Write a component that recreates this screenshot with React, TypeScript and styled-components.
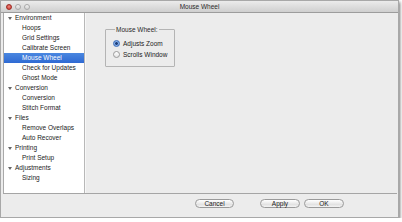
import styled, { createGlobalStyle } from 'styled-components'

const Global = createGlobalStyle`
  html, body { margin: 0; padding: 0; background: #fff; }
  body { font-family: "Liberation Sans", Arial, sans-serif; }
`

const Window = styled.div`
  width: 399px;
  height: 218px;
  display: flex;
  flex-direction: column;
  background: #ececec;
  border: 1px solid #a8a8a8;
  box-sizing: border-box;
  box-shadow: 1px 2px 3px rgba(0, 0, 0, 0.55);
  overflow: hidden;
`

const TitleBar = styled.div`
  height: 12px;
  flex: none;
  display: flex;
  align-items: center;
  position: relative;
  background: linear-gradient(#ebebeb, #cfcfcf);
  border-bottom: 1px solid #9c9c9c;
  box-sizing: border-box;
`

const Lights = styled.div`
  display: flex;
  gap: 3px;
  padding-left: 5px;
`

const Light = styled.span<{ $red?: boolean }>`
  width: 6px;
  height: 6px;
  border-radius: 50%;
  box-sizing: border-box;
  background: ${(p) => (p.$red ? 'radial-gradient(circle at 50% 40%, #f08a80, #c9302a)' : 'linear-gradient(#f3f3f3, #d2d2d2)')};
  border: 1px solid ${(p) => (p.$red ? '#9c2a22' : '#a9a9a9')};
`

const Title = styled.div`
  position: absolute;
  left: 0;
  right: 0;
  text-align: center;
  font-size: 6.5px;
  color: #2a2a2a;
  pointer-events: none;
`

const Body = styled.div`
  height: 180px;
  flex: none;
  display: flex;
  padding-left: 2px;
`

const Sidebar = styled.div`
  width: 82px;
  background: #fff;
  border-left: 1px solid #a9a9a9;
  border-right: 1px solid #b8b8b8;
  box-sizing: border-box;
`

const Row = styled.div<{ $selected?: boolean; $child?: boolean }>`
  height: 10px;
  line-height: 10px;
  font-size: 6.5px;
  display: flex;
  align-items: center;
  padding-left: ${(p) => (p.$child ? '18px' : '4px')};
  color: ${(p) => (p.$selected ? '#fff' : '#1a1a1a')};
  background: ${(p) => (p.$selected ? 'linear-gradient(#4a87e0, #2f6ad3)' : 'transparent')};
  white-space: nowrap;
`

const Arrow = styled.span`
  width: 0;
  height: 0;
  border-left: 2px solid transparent;
  border-right: 2px solid transparent;
  border-top: 3px solid #666;
  margin-right: 3px;
`

const Content = styled.div`
  flex: 1;
  border-left: 1px solid #f7f7f7;
  padding: 13px 0 0 19px;
`

const GroupBox = styled.fieldset`
  margin: 0;
  width: 70px;
  height: 41px;
  box-sizing: border-box;
  border: 1px solid #b4b4b4;
  border-radius: 1px;
  padding: 6px 0 0 7px;
  display: flex;
  flex-direction: column;
  gap: 2px;
`

const Legend = styled.legend`
  font-size: 6.5px;
  color: #2a2a2a;
  padding: 0 1px;
  margin-left: 2px;
`

const RadioRow = styled.label`
  display: flex;
  align-items: center;
  gap: 3px;
  font-size: 6.5px;
  color: #1a1a1a;
  height: 9px;
`

const Radio = styled.span<{ $on?: boolean }>`
  width: 7px;
  height: 7px;
  border-radius: 50%;
  box-sizing: border-box;
  border: 1px solid ${(p) => (p.$on ? '#3a6cb8' : '#9a9a9a')};
  background: ${(p) => (p.$on ? 'radial-gradient(circle, #1f3f7a 0 1.2px, #8fb6ec 1.6px, #5d8fdb)' : 'linear-gradient(#fff, #e4e4e4)')};
`

const Separator = styled.div`
  height: 1px;
  flex: none;
  margin: 0 1px 0 2px;
  background: #a5a5a5;
`

const Footer = styled.div`
  flex: 1;
  display: flex;
  align-items: flex-start;
  padding: 5px 0 0 194px;
  box-sizing: border-box;
`

const Button = styled.button<{ $w: number; $gap?: number }>`
  width: ${(p) => p.$w}px;
  height: 9px;
  margin-left: ${(p) => p.$gap ?? 0}px;
  padding: 0;
  border: 1px solid #9a9a9a;
  border-radius: 5px;
  background: linear-gradient(#ffffff, #e9e9e9 50%, #dcdcdc 51%, #f4f4f4);
  font-family: "Liberation Sans", Arial, sans-serif;
  font-size: 6.5px;
  line-height: 7px;
  color: #1a1a1a;
`

type Item = { label: string; child?: boolean; selected?: boolean }

const items: Item[] = [
  { label: 'Environment' },
  { label: 'Hoops', child: true },
  { label: 'Grid Settings', child: true },
  { label: 'Calibrate Screen', child: true },
  { label: 'Mouse Wheel', child: true, selected: true },
  { label: 'Check for Updates', child: true },
  { label: 'Ghost Mode', child: true },
  { label: 'Conversion' },
  { label: 'Conversion', child: true },
  { label: 'Stitch Format', child: true },
  { label: 'Files' },
  { label: 'Remove Overlaps', child: true },
  { label: 'Auto Recover', child: true },
  { label: 'Printing' },
  { label: 'Print Setup', child: true },
  { label: 'Adjustments' },
  { label: 'Sizing', child: true },
]

export default function App() {
  return (
    <>
      <Global />
      <Window>
        <TitleBar>
          <Lights>
            <Light $red />
            <Light />
            <Light />
          </Lights>
          <Title>Mouse Wheel</Title>
        </TitleBar>
        <Body>
          <Sidebar>
            {items.map((it, i) => (
              <Row key={i} $child={it.child} $selected={it.selected}>
                {!it.child && <Arrow />}
                {it.label}
              </Row>
            ))}
          </Sidebar>
          <Content>
            <GroupBox>
              <Legend>Mouse Wheel:</Legend>
              <RadioRow>
                <Radio $on />
                Adjusts Zoom
              </RadioRow>
              <RadioRow>
                <Radio />
                Scrolls Window
              </RadioRow>
            </GroupBox>
          </Content>
        </Body>
        <Separator />
        <Footer>
          <Button $w={39}>Cancel</Button>
          <Button $w={40} $gap={26}>Apply</Button>
          <Button $w={40} $gap={4}>OK</Button>
        </Footer>
      </Window>
    </>
  )
}
